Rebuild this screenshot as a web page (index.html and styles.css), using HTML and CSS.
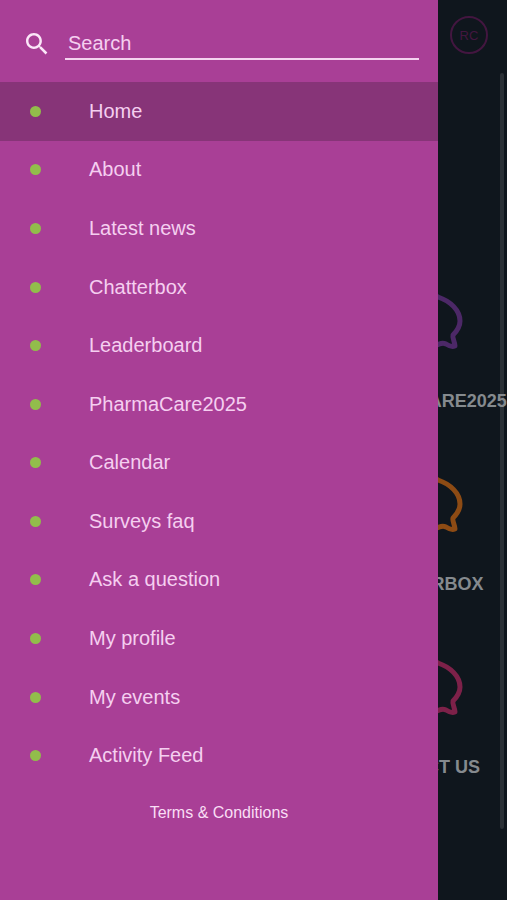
FILE: index.html
```
<!DOCTYPE html>
<html lang="en">
<head>
    <meta charset="UTF-8">
    <meta name="viewport" content="width=device-width, initial-scale=1">
    <title>Home</title>
    <link rel="stylesheet" href="styles.css">
</head>
<body>

    <div class="page">
        <div class="scrollbar"></div>
        <header class="topbar">
            <button class="avatar" type="button">RC</button>
        </header>
        <main class="tiles">
            <a class="tile tile-purple" href="#pharmacare">
                <svg class="tile-icon" viewBox="0 0 84 60" aria-hidden="true"><path d="M42 1C48 1 53 2 58 5C70 9 80 18 80 29C80 35 77 39 73 43C72 46 75 50 75 54C72 55 69 54 66 52C62 50 59 52 55 54C30 62 4 48 4 29C4 14 22 1 42 1Z"/></svg>
                <span>PHARMACARE2025</span>
            </a>
            <a class="tile tile-orange" href="#chatterbox">
                <svg class="tile-icon" viewBox="0 0 84 60" aria-hidden="true"><path d="M42 1C48 1 53 2 58 5C70 9 80 18 80 29C80 35 77 39 73 43C72 46 75 50 75 54C72 55 69 54 66 52C62 50 59 52 55 54C30 62 4 48 4 29C4 14 22 1 42 1Z"/></svg>
                <span>CHATTERBOX</span>
            </a>
            <a class="tile tile-pink" href="#contact">
                <svg class="tile-icon" viewBox="0 0 84 60" aria-hidden="true"><path d="M42 1C48 1 53 2 58 5C70 9 80 18 80 29C80 35 77 39 73 43C72 46 75 50 75 54C72 55 69 54 66 52C62 50 59 52 55 54C30 62 4 48 4 29C4 14 22 1 42 1Z"/></svg>
                <span>CONTACT US</span>
            </a>
        </main>
    </div>

    <aside class="drawer">
        <form class="search">
            <label for="search">
                <svg class="search-icon" viewBox="3 3 18 18" role="img" aria-label="Search"><path d="M15.5 14h-.79l-.28-.27C15.41 12.59 16 11.11 16 9.5 16 5.91 13.09 3 9.5 3S3 5.91 3 9.5 5.91 16 9.5 16c1.61 0 3.09-.59 4.23-1.57l.27.28v.79l5 4.99L20.49 19l-4.99-5zm-6 0C7.01 14 5 11.99 5 9.5S7.01 5 9.5 5 14 7.01 14 9.5 11.99 14 9.5 14z"/></svg>
            </label>
            <input type="search" id="search" name="search" placeholder="Search">
        </form>
        <nav class="menu">
            <a class="menu-item active" href="#home">Home</a>
            <a class="menu-item" href="#about">About</a>
            <a class="menu-item" href="#news">Latest news</a>
            <a class="menu-item" href="#chatterbox">Chatterbox</a>
            <a class="menu-item" href="#leaderboard">Leaderboard</a>
            <a class="menu-item" href="#pharmacare">PharmaCare2025</a>
            <a class="menu-item" href="#calendar">Calendar</a>
            <a class="menu-item" href="#surveys">Surveys faq</a>
            <a class="menu-item" href="#ask">Ask a question</a>
            <a class="menu-item" href="#profile">My profile</a>
            <a class="menu-item" href="#events">My events</a>
            <a class="menu-item" href="#activity">Activity Feed</a>
        </nav>
        <footer class="terms"><a href="#terms">Terms &amp; Conditions</a></footer>
    </aside>

</body>
</html>
```
FILE: styles.css
```
* { box-sizing: border-box; }
body { margin: 0; min-height: 100vh; position: relative; overflow-x: hidden; background-color: #0f161d; font-family: "Liberation Sans", Arial, Helvetica, sans-serif; }
a { color: inherit; text-decoration: none; }

/* Dimmed page behind the drawer */
.page { min-height: 100vh; }
.topbar { display: flex; justify-content: flex-end; padding: 16px 19px; }
.avatar { width: 38px; height: 38px; padding: 0; border: 2px solid #431640; border-radius: 50%; background: none; color: #431640; font: 13px "Liberation Sans", Arial, sans-serif; }
.tiles { position: relative; display: grid; grid-template-columns: repeat(3, minmax(0, 1fr)); grid-auto-rows: 183px; padding: 222px 1px 0 0; }
.tile { grid-column: 3; display: flex; flex-direction: column; align-items: center; gap: 39px; color: #858a8e; font-size: 18px; font-weight: bold; line-height: 20px; white-space: nowrap; }
.tile-icon { width: 84px; height: 60px; fill: none; stroke-width: 5; stroke-linejoin: round; overflow: visible; }
.tile-purple .tile-icon { stroke: #4c2867; }
.tile-orange .tile-icon { stroke: #8d4b14; }
.tile-pink .tile-icon { stroke: #7d2149; }
.scrollbar { position: absolute; top: 73px; right: 3px; bottom: 71px; width: 4px; border-radius: 2px; background-color: #2a3036; }

/* Drawer */
.drawer { position: absolute; top: 0; bottom: 0; left: 0; width: calc(100% - 69px); display: flex; flex-direction: column; background-color: #a93f96; color: #f5cff0; }
.search { display: flex; align-items: center; gap: 17px; height: 82px; padding: 6px 19px 0 26px; }
.search label { display: flex; }
.search-icon { width: 22px; height: 22px; fill: #fbe6f8; }
.search input { flex: 1; min-width: 0; height: 32px; padding: 0 3px; border: none; border-bottom: 2px solid #f5d3f0; border-radius: 0; outline: none; appearance: none; background: none; color: inherit; font-family: inherit; font-size: 20px; }
.search input::placeholder { color: #f5cff0; opacity: 1; }
.menu { flex: 1; display: flex; flex-direction: column; }
.menu-item { flex: 1; display: flex; align-items: center; gap: 48px; padding: 0 30px; font-size: 20px; }
.menu-item::before { content: ""; width: 11px; height: 11px; border-radius: 50%; background-color: #92bd4b; }
.menu-item.active { background-color: #873478; }
.terms { height: 115px; padding-top: 18px; text-align: center; font-size: 16px; line-height: 20px; color: #f9def5; }
```
